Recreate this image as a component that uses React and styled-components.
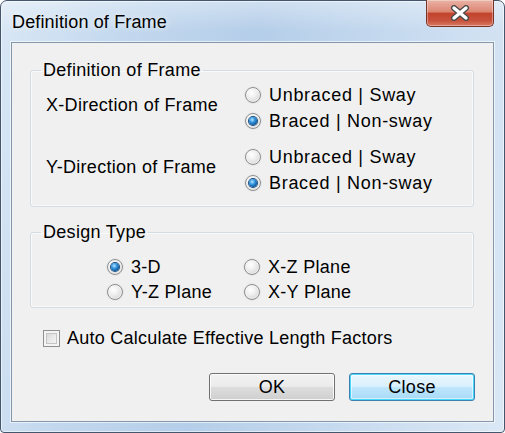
import React from "react";
import styled, { createGlobalStyle, css } from "styled-components";

const GlobalStyle = createGlobalStyle`
  html, body { margin: 0; padding: 0; background: #ffffff; }
  body { font-family: "Liberation Sans", Arial, sans-serif; }
  * { box-sizing: border-box; }
`;

const Window = styled.div`
  width: 505px;
  height: 433px;
  display: flex;
  flex-direction: column;
  padding: 0 10px 10px 10px;
  border: 1px solid #44566b;
  border-radius: 7px 7px 4px 4px;
  background:
    linear-gradient(180deg, rgba(255,255,255,0.35) 0px, rgba(255,255,255,0) 30px),
    linear-gradient(100deg, #d9e7f5 0%, #c3d8ee 22%, #b5cee9 45%, #c6daef 70%, #dbe8f5 100%);
  box-shadow: inset 0 0 0 1px rgba(255,255,255,0.55);
`;

const TitleBar = styled.div`
  height: 41px;
  display: flex;
  justify-content: space-between;
  align-items: flex-start;
`;

const Title = styled.div`
  padding: 11px 0 0 1px;
  font-size: 18px;
  line-height: 20px;
  letter-spacing: 0.15px;
  color: #000;
  text-shadow: 0 0 6px rgba(255,255,255,0.9);
`;

const CloseButton = styled.div`
  width: 68px;
  height: 27px;
  margin-top: -1px;
  display: flex;
  align-items: center;
  justify-content: center;
  border: 1px solid #7a3226;
  border-top: none;
  border-radius: 0 0 5px 5px;
  background: linear-gradient(180deg, #eab3a6 0%, #dc8672 45%, #c2432c 52%, #c8533d 80%, #d77a62 100%);
  box-shadow: inset 0 0 0 1px rgba(255,255,255,0.35);
`;

const Client = styled.div`
  flex: 1;
  display: flex;
  flex-direction: column;
  padding: 17px 19px 0 18px;
  background: #f0f0f0;
  border: 1px solid #8496a9;
  box-shadow: 0 0 0 1px rgba(255,255,255,0.6);
  font-size: 18px;
  letter-spacing: 0.3px;
  color: #000;
`;

const GroupBox = styled.fieldset`
  margin: ${(p) => p.$top || 0}px 0 0 0;
  padding: 0;
  border: 1px solid #d3dce3;
  border-radius: 3px;
  box-shadow: inset 0 0 0 1px rgba(255,255,255,0.6);
  min-width: 0;
`;

const Legend = styled.legend`
  margin-left: 10px;
  padding: 0 2px;
  font-size: 18px;
  line-height: 20px;
`;

const DirectionGrid = styled.div`
  display: grid;
  grid-template-columns: 199px 1fr;
  row-gap: 10px;
  padding: 2px 0 10px 15px;
`;

const DirLabel = styled.div`
  align-self: center;
  padding-bottom: 6px;
  line-height: 20px;
`;

const OptionStack = styled.div`
  display: flex;
  flex-direction: column;
`;

const TypeGrid = styled.div`
  display: grid;
  grid-template-columns: 137px 1fr;
  padding: 12px 0 3px 76px;
`;

const Option = styled.label`
  display: flex;
  align-items: center;
  gap: 8px;
  height: ${(p) => p.$h || 26}px;
  line-height: 20px;
  letter-spacing: ${(p) => (p.$wide ? 0.7 : 0.3)}px;
`;

const RadioCircle = styled.span`
  width: 16px;
  height: 16px;
  flex: none;
  border-radius: 50%;
  border: 1px solid #8d8e8f;
  background: radial-gradient(circle at 40% 35%, #ffffff 0%, #f1f1f1 35%, #cbcbcb 100%);
  display: flex;
  align-items: center;
  justify-content: center;
  box-shadow: inset 0 0 0 1px rgba(255,255,255,0.5), 0 0 0 1px rgba(0,0,0,0.04);
  ${(p) =>
    p.$checked &&
    css`
      &::after {
        content: "";
        width: 8px;
        height: 8px;
        border-radius: 50%;
        background: radial-gradient(circle at 40% 35%, #b9e6ff 0%, #3a9ae0 35%, #0f5ea6 70%, #0a3f73 100%);
        box-shadow: 0 0 0 1px #1a4f7e;
      }
    `}
`;

const CheckRow = styled.label`
  display: flex;
  align-items: center;
  gap: 7px;
  height: 20px;
  margin: 20px 0 0 13px;
  line-height: 20px;
  letter-spacing: 0.25px;
`;

const CheckBox = styled.span`
  width: 17px;
  height: 17px;
  flex: none;
  border: 1px solid #8e8f8f;
  background: linear-gradient(135deg, #d2d2d2 0%, #ececec 60%, #fafafa 100%);
  box-shadow: inset 0 0 0 2px #f4f4f4, inset 0 0 0 3px #c4c4c4;
`;

const ButtonRow = styled.div`
  display: flex;
  justify-content: flex-end;
  gap: 14px;
  margin: 25px -1px 0 0;
`;

const Button = styled.button`
  width: 126px;
  height: 28px;
  padding: 0;
  font-family: "Liberation Sans", Arial, sans-serif;
  font-size: 18px;
  line-height: 20px;
  letter-spacing: 0.3px;
  color: #000;
  border-radius: 3px;
  border: 1px solid #707070;
  background: linear-gradient(180deg, #f2f2f2 0%, #ebebeb 48%, #dddddd 52%, #cfcfcf 100%);
  box-shadow: inset 0 0 0 1px rgba(255,255,255,0.8);
  ${(p) =>
    p.$default &&
    css`
      border-color: #3c7fb1;
      background: linear-gradient(180deg, #eaf6fd 0%, #d9f0fc 48%, #bee6fd 52%, #a7d9f5 100%);
      box-shadow: inset 0 0 0 1px #48d8fb, inset 0 0 0 2px rgba(255,255,255,0.5);
    `}
`;

const Radio = ({ checked, h, wide, children }) => (
  <Option $h={h} $wide={wide}>
    <RadioCircle $checked={checked} />
    <span>{children}</span>
  </Option>
);

export default function App() {
  return (
    <>
      <GlobalStyle />
      <Window>
        <TitleBar>
          <Title>Definition of Frame</Title>
          <CloseButton>
            <svg width="22" height="16" viewBox="0 0 22 16">
              <path d="M5 3 L17 13 M17 3 L5 13" stroke="#4a4a4a" strokeWidth="6" strokeLinecap="round" />
              <path d="M5 3 L17 13 M17 3 L5 13" stroke="#ffffff" strokeWidth="3.4" strokeLinecap="round" />
            </svg>
          </CloseButton>
        </TitleBar>
        <Client>
          <GroupBox>
            <Legend>Definition of Frame</Legend>
            <DirectionGrid>
              <DirLabel>X-Direction of Frame</DirLabel>
              <OptionStack>
                <Radio wide>Unbraced | Sway</Radio>
                <Radio checked wide>Braced | Non-sway</Radio>
              </OptionStack>
              <DirLabel>Y-Direction of Frame</DirLabel>
              <OptionStack>
                <Radio wide>Unbraced | Sway</Radio>
                <Radio checked wide>Braced | Non-sway</Radio>
              </OptionStack>
            </DirectionGrid>
          </GroupBox>
          <GroupBox $top={15}>
            <Legend>Design Type</Legend>
            <TypeGrid>
              <Radio checked h={25}>3-D</Radio>
              <Radio h={25}>X-Z Plane</Radio>
              <Radio h={25}>Y-Z Plane</Radio>
              <Radio h={25}>X-Y Plane</Radio>
            </TypeGrid>
          </GroupBox>
          <CheckRow>
            <CheckBox />
            <span>Auto Calculate Effective Length Factors</span>
          </CheckRow>
          <ButtonRow>
            <Button>OK</Button>
            <Button $default>Close</Button>
          </ButtonRow>
        </Client>
      </Window>
    </>
  );
}
